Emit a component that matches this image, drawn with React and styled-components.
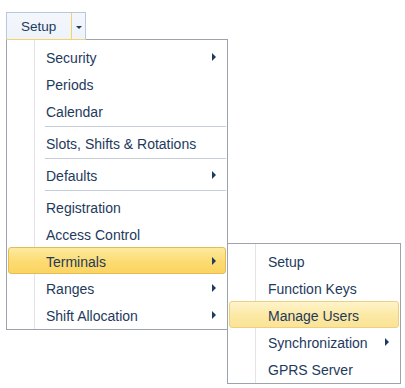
import React from "react";
import styled, { createGlobalStyle, css } from "styled-components";

const Global = createGlobalStyle`
  html, body { margin: 0; padding: 0; background: #ffffff; }
  body { font-family: "Liberation Sans", Arial, sans-serif; }
`;

const Page = styled.div`
  padding: 12px 0 0 6px;
  width: 405px;
  height: 388px;
  box-sizing: border-box;
  display: flex;
  flex-direction: column;
  align-items: flex-start;
`;

const SplitButton = styled.div`
  position: relative;
  z-index: 1;
  display: flex;
  height: 28px;
  box-sizing: border-box;
  border: 1px solid #b9c8da;
  border-bottom: 1px solid #f2d36a;
  background: linear-gradient(#f3f7fc, #eef3fa);
`;

const ButtonLabel = styled.div`
  display: flex;
  align-items: center;
  padding: 1px 0 0 14px;
  width: 65px;
  box-sizing: border-box;
  font-size: 13.5px;
  color: #1e3a5c;
  border-right: 1px solid #f2d36a;
`;

const ButtonArrow = styled.div`
  width: 13px;
  display: flex;
  align-items: center;
  justify-content: center;
  &::after {
    content: "";
    border-left: 3px solid transparent;
    border-right: 3px solid transparent;
    border-top: 3px solid #1e3a5c;
    margin-top: 2px;
  }
`;

const Menu = styled.div`
  position: ${(p) => (p.$sub ? "absolute" : "relative")};
  ${(p) =>
    p.$sub &&
    css`
      left: calc(100% + 2px);
      top: -5px;
    `}
  margin-top: ${(p) => (p.$sub ? "0" : "-1px")};
  width: ${(p) => p.$width}px;
  box-sizing: border-box;
  border: 1px solid #9da3ab;
  padding: 3px 1px 1px;
  background: linear-gradient(
    to right,
    #ffffff 0 27px,
    #e2e4e7 27px 28px,
    #ffffff 28px
  );
  display: flex;
  flex-direction: column;
`;

const Item = styled.div`
  position: relative;
  height: 27px;
  box-sizing: border-box;
  display: flex;
  align-items: center;
  justify-content: space-between;
  padding: 2px 9px 0 ${(p) => (p.$sub ? 38 : 37)}px;
  font-size: 14px;
  color: #1e3a5c;
  white-space: nowrap;
  border: 1px solid transparent;
  border-radius: 3px;
  ${(p) =>
    p.$state === "open" &&
    css`
      background: linear-gradient(#fdeaa0, #fcdc74 50%, #fbd462);
      border-color: #e2bd55;
    `}
  ${(p) =>
    p.$state === "hover" &&
    css`
      background: linear-gradient(#fef4cc, #fce9a6 50%, #fbe396);
      border-color: #ecd07e;
    `}
`;

const Arrow = styled.span`
  width: 0;
  height: 0;
  border-top: 4px solid transparent;
  border-bottom: 4px solid transparent;
  border-left: 4px solid #1e3a5c;
  margin-top: -1px;
`;

const Separator = styled.div`
  height: 5px;
  margin-left: 37px;
  display: flex;
  flex-direction: column;
  justify-content: center;
  &::before {
    content: "";
    height: 1px;
    background: #c5cdd9;
  }
  &::after {
    content: "";
    height: 1px;
    background: #ffffff;
  }
`;

const subItems = [
  { label: "Setup" },
  { label: "Function Keys" },
  { label: "Manage Users", state: "hover" },
  { label: "Synchronization", arrow: true },
  { label: "GPRS Server" },
];

const mainItems = [
  { label: "Security", arrow: true },
  { label: "Periods" },
  { label: "Calendar" },
  { sep: true },
  { label: "Slots, Shifts & Rotations" },
  { sep: true },
  { label: "Defaults", arrow: true },
  { sep: true },
  { label: "Registration" },
  { label: "Access Control" },
  { label: "Terminals", arrow: true, state: "open", sub: subItems },
  { label: "Ranges", arrow: true },
  { label: "Shift Allocation", arrow: true },
];

function MenuList({ items, sub, width }) {
  return (
    <Menu $sub={sub} $width={width}>
      {items.map((it, i) =>
        it.sep ? (
          <Separator key={i} />
        ) : (
          <Item key={i} $state={it.state} $sub={sub}>
            <span>{it.label}</span>
            {it.arrow && <Arrow />}
            {it.sub && <MenuList items={it.sub} sub width={174} />}
          </Item>
        )
      )}
    </Menu>
  );
}

export default function App() {
  return (
    <>
      <Global />
      <Page>
        <SplitButton>
          <ButtonLabel>Setup</ButtonLabel>
          <ButtonArrow />
        </SplitButton>
        <MenuList items={mainItems} width={222} />
      </Page>
    </>
  );
}
